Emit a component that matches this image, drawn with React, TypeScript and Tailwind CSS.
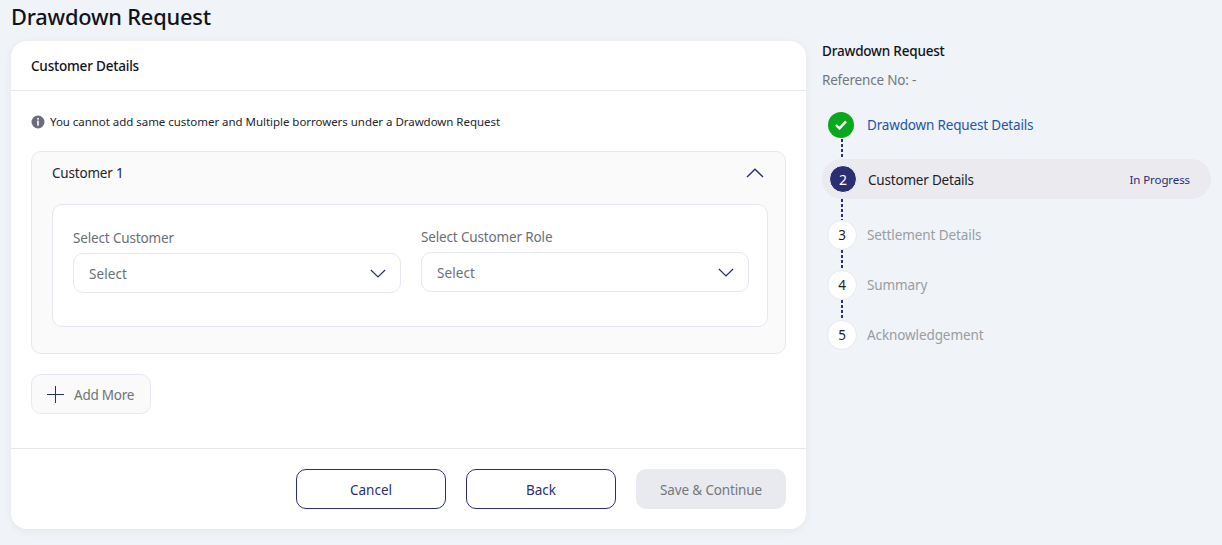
const font = "font-['Noto_Sans',sans-serif]";

const Dots = ({ h }: { h: string }) => (
  <div className={`${h} ml-[19px] w-[2px] bg-[repeating-linear-gradient(to_bottom,#2a2e72_0,#2a2e72_3px,transparent_3px,transparent_5px)]`} />
);

const Chevron = ({ up, className }: { up?: boolean; className: string }) => (
  <svg viewBox="0 0 18 10" fill="none" stroke="#2a2e72" strokeWidth="1.4" className={className}>
    <path d={up ? "M1 9L9 1.2L17 9" : "M1 1L9 8.8L17 1"} />
  </svg>
);

const SelectField = ({ label, top }: { label: string; top: string }) => (
  <div className={`flex w-[328px] shrink-0 flex-col ${top}`}>
    <span className="h-[21px] text-[13.5px] leading-[21px] tracking-[-0.15px] text-[#6b6f76]">{label}</span>
    <div className="mt-1 flex h-10 items-center justify-between rounded-[10px] border border-[#e3e8f0] bg-white pl-[15px] pr-[14px]">
      <span className="pt-[2px] text-[13.5px] tracking-[0.1px] text-[#6b6f76]">Select</span>
      <Chevron className="h-[9px] w-[16px]" />
    </div>
  </div>
);

const Step = ({ n, label }: { n: number; label: string }) => (
  <div className="flex h-[30px] items-center pl-[5px]">
    <div className="flex h-[30px] w-[30px] items-center justify-center rounded-full border border-[#e6e9f0] bg-white text-[13.5px] text-[#1c1f26]">
      {n}
    </div>
    <span className="ml-[10px] text-[13.5px] tracking-[-0.1px] text-[#9a9da3]">{label}</span>
  </div>
);

export default function App() {
  return (
    <div className={`${font} h-[545px] w-[1222px] overflow-hidden bg-[#f0f3f7]`}>
      <h1 className="h-[41px] pl-[11px] pt-[2px] text-[21.8px] font-medium leading-[30px] tracking-[-0.2px] text-[#10131a]">
        Drawdown Request
      </h1>
      <div className="flex">
        <div className="ml-[11px] h-[488px] w-[795px] rounded-2xl bg-white shadow-[0_2px_10px_rgba(30,40,70,0.06)]">
          <div className="flex h-[50px] items-center border-b border-[#e4e8f1] pl-5 pt-[2px] text-[13.5px] font-medium tracking-[-0.2px] text-[#10131a]">
            Customer Details
          </div>
          <div className="px-5 pt-[21px]">
            <div className="flex h-[20px] items-center">
              <svg viewBox="0 0 14 14" className="h-[14px] w-[14px]">
                <circle cx="7" cy="7" r="6.5" fill="#6b6d7a" />
                <rect x="6.2" y="3" width="1.6" height="1.6" fill="#fff" />
                <rect x="6.2" y="5.6" width="1.6" height="5" fill="#fff" />
              </svg>
              <span className="ml-[5px] text-[11.5px] tracking-[-0.04px] text-[#23252d]">
                You cannot add same customer and Multiple borrowers under a Drawdown Request
              </span>
            </div>
            <div className="mt-[19px] h-[203px] rounded-[10px] border border-[#e6e9f1] bg-[#fafafb] px-5">
              <div className="flex h-[52px] items-center justify-between pb-[10px] pr-[1px]">
                <span className="text-[13.5px] tracking-[-0.2px] text-[#23252d]">Customer 1</span>
                <Chevron up className="h-[10px] w-[18px]" />
              </div>
              <div className="flex h-[123px] w-[716px] gap-5 rounded-[10px] border border-[#e3e8f0] bg-white pl-5 pr-[18px]">
                <SelectField label="Select Customer" top="pt-[23px]" />
                <SelectField label="Select Customer Role" top="pt-[22px]" />
              </div>
            </div>
            <button className="mt-5 flex h-10 w-[120px] items-center rounded-[10px] border border-[#e6e9f1] bg-[#fafafb] pl-[15px]">
              <svg viewBox="0 0 17 17" stroke="#2a2e72" strokeWidth="1" className="h-[17px] w-[17px]">
                <path d="M8.5 0V17M0 8.5H17" />
              </svg>
              <span className="ml-[10px] pt-[2px] text-[13.5px] tracking-[-0.25px] text-[#6f7278]">Add More</span>
            </button>
          </div>
          <div className="mt-[34px] flex h-[81px] items-start justify-end gap-5 border-t border-[#e5e6ea] pr-5 pt-5">
            <button className="h-10 w-[150px] rounded-[10px] border border-[#2a2e72] pt-[2px] text-[13.5px] text-[#2a2e72]">
              Cancel
            </button>
            <button className="h-10 w-[150px] rounded-[10px] border border-[#2a2e72] pt-[2px] text-[13.5px] text-[#2a2e72]">
              Back
            </button>
            <button className="h-10 w-[150px] rounded-[10px] bg-[#e9eaef] pt-[2px] text-[13.5px] tracking-[-0.15px] text-[#74777d]">
              Save &amp; Continue
            </button>
          </div>
        </div>
        <div className="ml-4 w-[389px]">
          <div className="flex h-5 items-center text-[13.5px] font-medium tracking-[-0.2px] text-[#10131a]">
            Drawdown Request
          </div>
          <div className="mt-[9px] flex h-5 items-center text-[13.5px] tracking-[-0.2px] text-[#74777d]">
            Reference No: -
          </div>
          <div className="mt-[21px] flex h-[28px] items-center pl-[6px]">
            <div className="flex h-[26px] w-[26px] items-center justify-center rounded-full bg-[#0aa81c]">
              <svg viewBox="0 0 12 10" fill="none" stroke="#fff" strokeWidth="2.4" className="h-[10px] w-[12px]">
                <path d="M1 5L4.5 8.4L11 1.4" />
              </svg>
            </div>
            <span className="ml-[13px] text-[13.5px] tracking-[-0.17px] text-[#1f55a8]">Drawdown Request Details</span>
          </div>
          <Dots h="h-[20px]" />
          <div className="flex h-10 items-center justify-between rounded-[20px] bg-[#eaeaef] pl-[7px] pr-[21px]">
            <div className="flex items-center">
              <div className="flex h-7 w-7 items-center justify-center rounded-full border border-white bg-[#2a2e72] text-[14px] text-white">
                2
              </div>
              <span className="ml-[11px] pt-[2px] text-[13.5px] tracking-[-0.2px] text-[#1c1f26]">Customer Details</span>
            </div>
            <span className="pt-[2px] text-[11.5px] tracking-[-0.1px] text-[#2a2e72]">In Progress</span>
          </div>
          <Dots h="h-[21px]" />
          <Step n={3} label="Settlement Details" />
          <Dots h="h-[20px]" />
          <Step n={4} label="Summary" />
          <Dots h="h-[20px]" />
          <Step n={5} label="Acknowledgement" />
        </div>
      </div>
    </div>
  );
}
